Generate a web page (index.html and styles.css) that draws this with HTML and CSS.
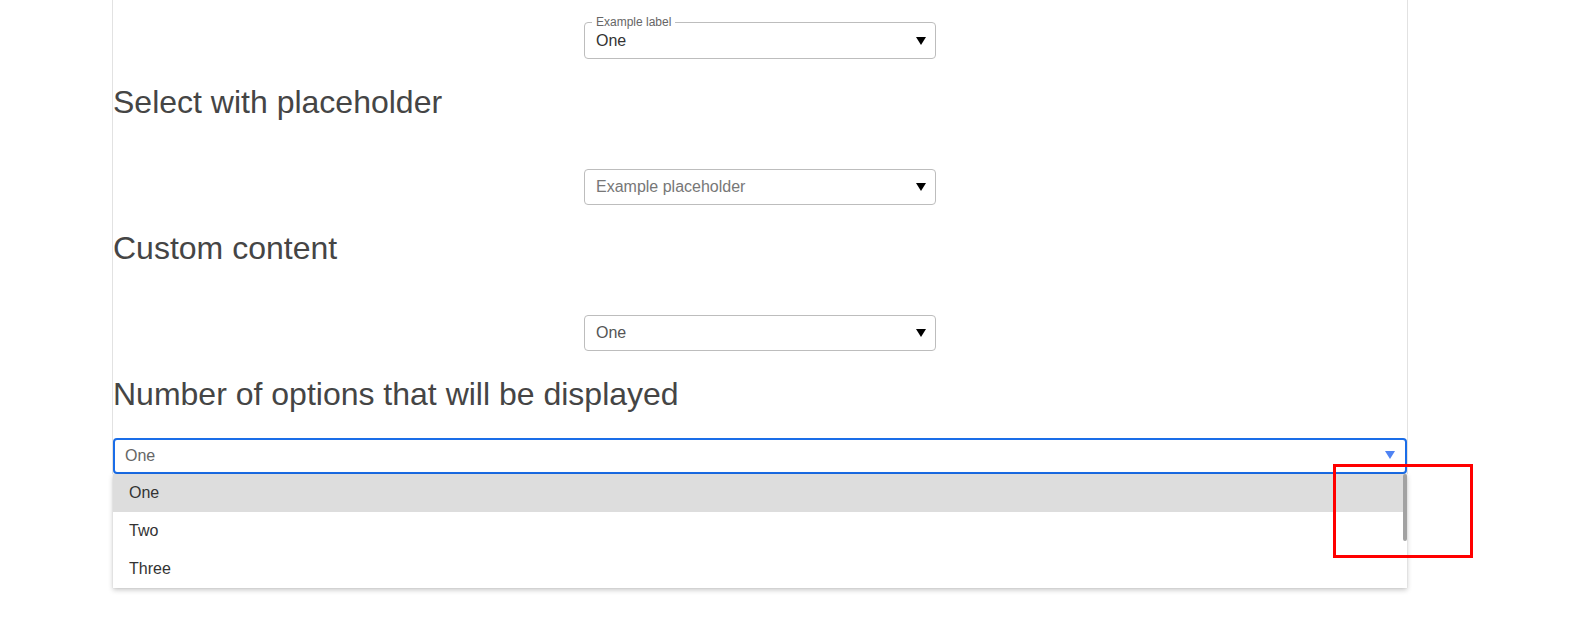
FILE: index.html
```html
<!DOCTYPE html>
<html>
<head>
<meta charset="utf-8">
<link rel="stylesheet" href="styles.css">
</head>
<body>
<div class="demo">
  <div class="field-row">
    <div class="select outlined">
      <span class="float-label">Example label</span>
      <span class="value">One</span>
      <span class="arrow"></span>
    </div>
  </div>
  <h2 class="heading">Select with placeholder</h2>
  <div class="field-row">
    <div class="select">
      <span class="placeholder">Example placeholder</span>
      <span class="arrow"></span>
    </div>
  </div>
  <h2 class="heading">Custom content</h2>
  <div class="field-row">
    <div class="select">
      <span class="value custom">One</span>
      <span class="arrow"></span>
    </div>
  </div>
  <h2 class="heading">Number of options that will be displayed</h2>
  <div class="wide-wrap">
    <div class="select wide">
      <span class="value muted">One</span>
      <span class="arrow blue"></span>
    </div>
    <ul class="menu">
      <li class="option active">One</li>
      <li class="option">Two</li>
      <li class="option">Three</li>
      <li class="scrollbar"></li>
    </ul>
  </div>
</div>
<div class="annotation"></div>
</body>
</html>
```

FILE: styles.css
```css
* { box-sizing: border-box; }
html, body { margin: 0; padding: 0; background: #fff; }
body {
  font-family: "Liberation Sans", Arial, sans-serif;
  position: relative;
  width: 1573px;
  height: 641px;
  overflow: hidden;
}
.demo {
  margin-left: 112px;
  width: 1296px;
  padding-top: 22px;
  border-left: 1px solid #e2e2e2;
  border-right: 1px solid #e2e2e2;
}
.field-row {
  display: flex;
  justify-content: center;
}
.heading {
  margin: 25px 0 25px 0;
  font-size: 32px;
  line-height: 37px;
  font-weight: normal;
  color: #454545;
}
.heading + .field-row { padding-top: 23px; }
.select {
  position: relative;
  width: 352px;
  height: 36px;
  border: 1px solid #bdbdbd;
  border-radius: 4px;
  display: flex;
  align-items: center;
  padding: 0 9px 0 11px;
  font-size: 16px;
  background: #fff;
}
.select.outlined { height: 37px; }
.float-label {
  position: absolute;
  top: -8px;
  left: 7px;
  padding: 0 4px;
  background: #fff;
  font-size: 12px;
  line-height: 14px;
  color: #666;
}
.value { flex: 1; color: #333; }
.value.custom { color: #555; }
.value.muted { color: #666; }
.placeholder { flex: 1; color: #777; }
.arrow {
  width: 0;
  height: 0;
  border-left: 5px solid transparent;
  border-right: 5px solid transparent;
  border-top: 8px solid #000;
}
.arrow.blue {
  border-left: 5px solid transparent;
  border-right: 5px solid transparent;
  border-top: 8px solid #4f83f3;
  margin-right: 1px;
  margin-top: -2px;
}
.wide-wrap { position: relative; }
.select.wide {
  width: 100%;
  border: 2px solid #1a6de8;
  border-radius: 4px;
  padding: 0 9px 0 10px;
}
.menu {
  position: absolute;
  top: 100%;
  left: 0;
  right: 0;
  margin: 0;
  padding: 0;
  list-style: none;
  background: #fff;
  box-shadow: 0 2px 5px rgba(0,0,0,0.22), 0 0 1px rgba(0,0,0,0.12);
  z-index: 2;
}
.option {
  height: 38px;
  display: flex;
  align-items: center;
  padding-left: 16px;
  font-size: 16px;
  color: #333;
}
.option.active { background: #dddddd; }
.scrollbar {
  position: absolute;
  top: 0;
  right: 0;
  width: 4px;
  height: 67px;
  background: #a2a2a2;
  border-radius: 2px;
}
.annotation {
  position: absolute;
  left: 1333px;
  top: 464px;
  width: 140px;
  height: 94px;
  border: 3px solid #ff0000;
  z-index: 5;
}
```
